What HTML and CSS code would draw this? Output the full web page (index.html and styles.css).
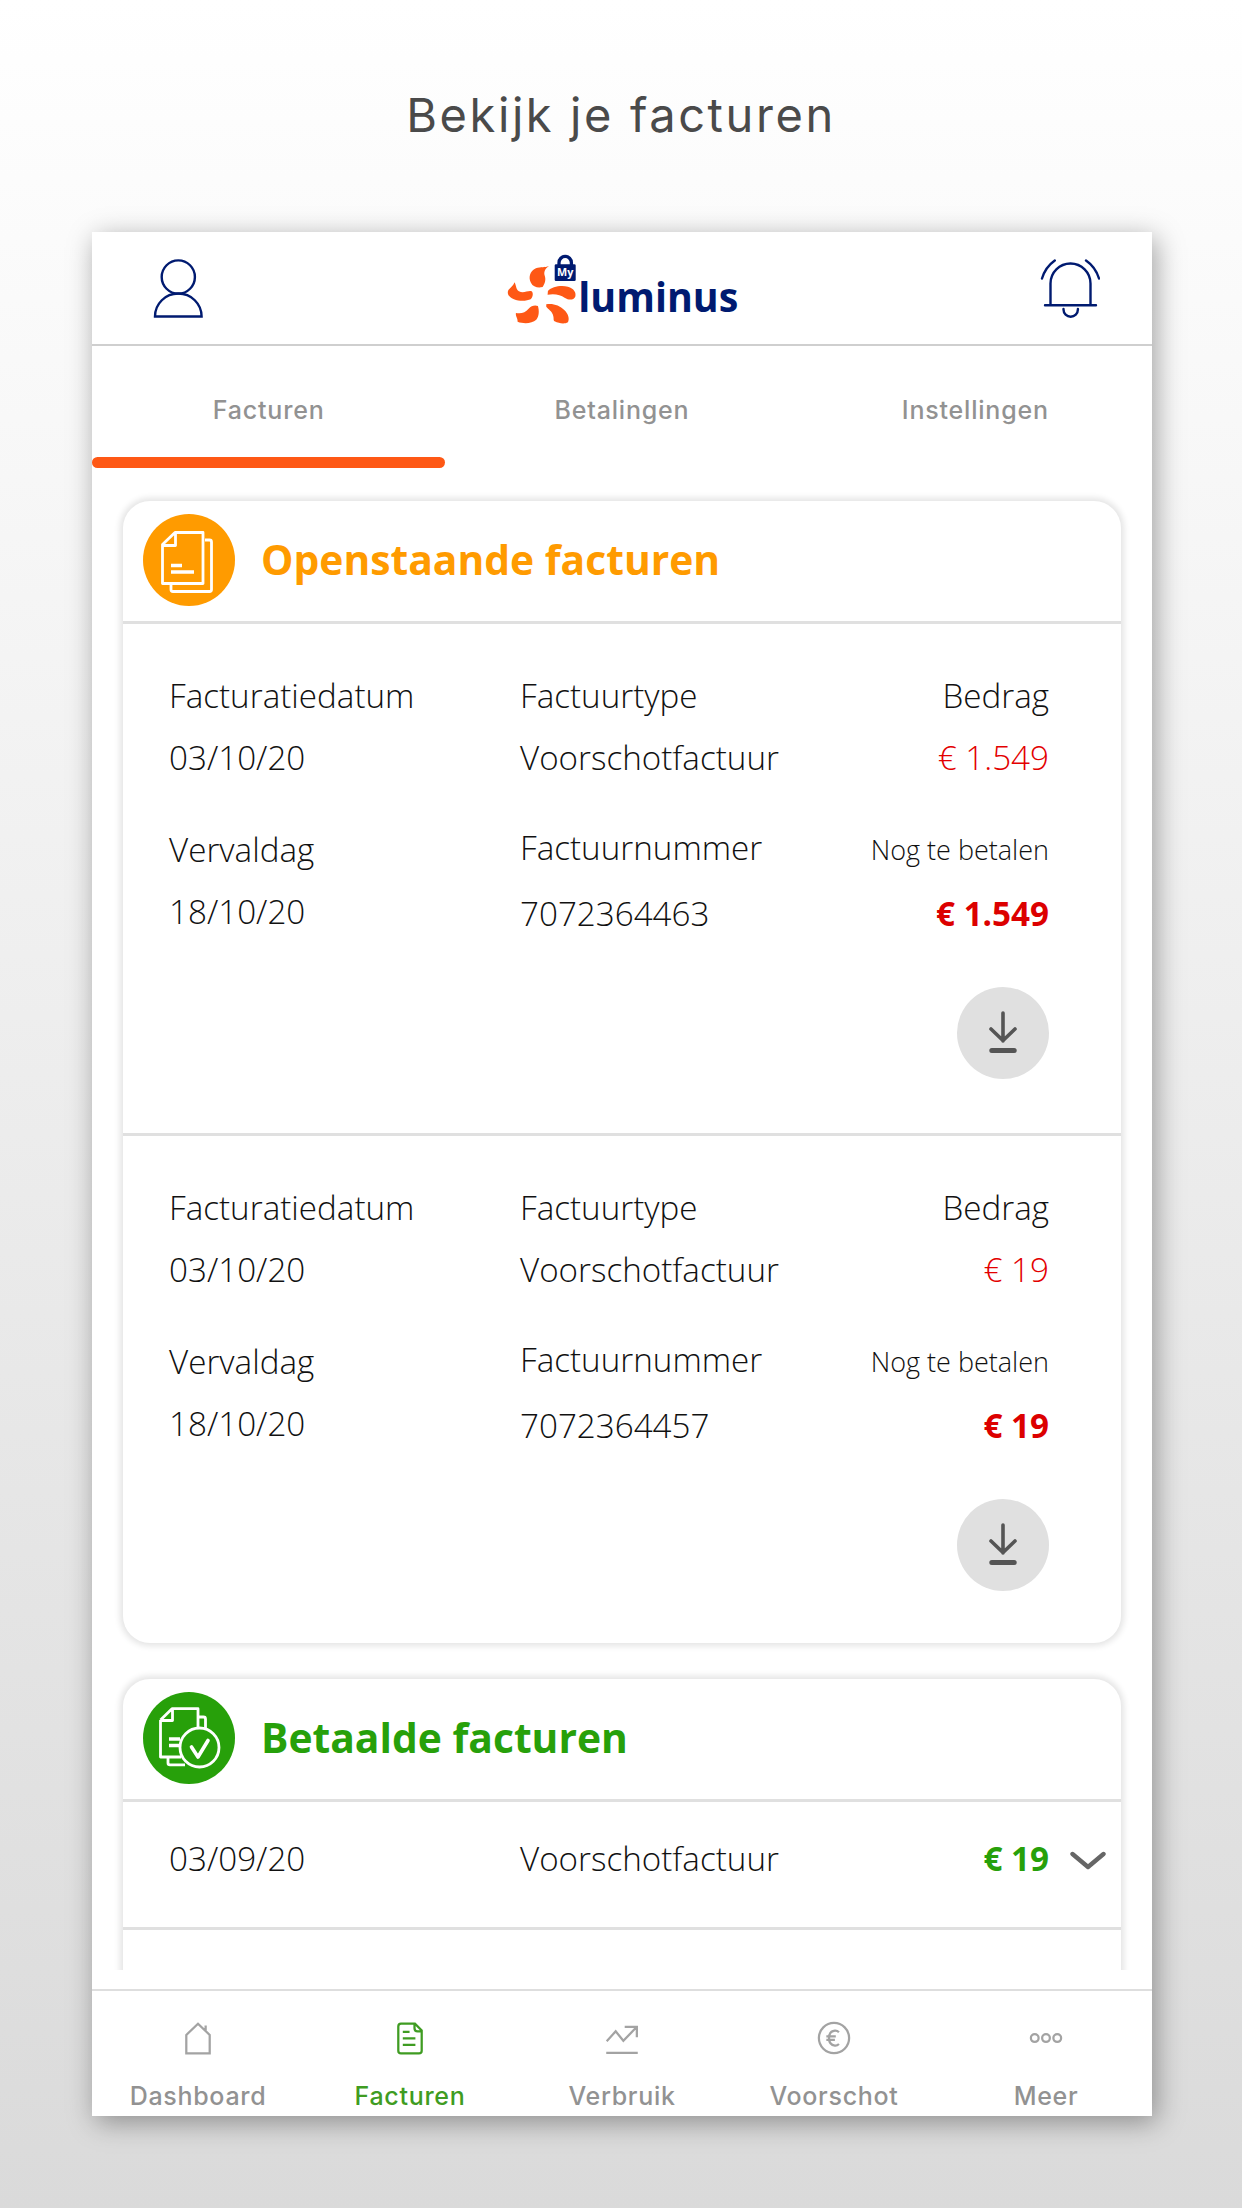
FILE: index.html
```html
<!DOCTYPE html>
<html lang="nl">
<head>
    <meta charset="UTF-8">
    <meta name="viewport" content="width=device-width, initial-scale=1.0">
    <title>My Luminus - Facturen</title>
    <link rel="stylesheet" href="styles.css">
</head>
<body>

    <h1>Bekijk je facturen</h1>

    <div class="phone">
        <header class="topbar">
            <svg class="icon-user" viewBox="0 0 50 60" width="50" height="60">
                <circle cx="25.3" cy="18" r="16.6"/>
                <path d="M2 57.5a23.3 23 0 0 1 46.600 0z"/>
            </svg>

            <svg class="logo" viewBox="0 0 240 80" width="240" height="80">
                <g class="petals" transform="translate(-21.400 -18.300) scale(.3333)">
                    <path d="M205 106C192 112 181 107 166 113C147 121 143 142 151 156C157 169 172 172 186 169C193 159 197 148 192 134C189 124 194 113 205 106Z"/>
                    <path d="M102 155C98 165 91 170 84 177C77 188 86 201 100 206C117 213 140 211 150 206C157 199 159 187 153 182C143 178 129 190 115 182C106 176 107 165 102 155Z"/>
                    <path d="M202 181C214 168 240 163 262 168C280 173 288 186 284 198C279 208 266 210 252 201C240 192 221 188 201 192Z"/>
                    <path d="M106 247C122 250 134 246 144 234C152 226 162 222 172 226C176 240 176 256 167 267C154 279 129 280 111 273C112 263 104 256 106 247Z"/>
                    <path d="M197 221C216 217 237 224 251 238C264 251 267 264 262 275C252 281 236 279 222 272C217 268 221 264 217 252C213 240 204 237 197 228Z"/>
                </g>
                <path class="lock-arc" d="M57 16.300V13.700a6.200 6.300 0 0 1 12.400 0v2.600"/>
                <rect class="lock-body" x="52.700" y="15.300" width="21" height="16.700" rx="1.300"/>
                <text class="lock-text" x="55" y="27" textLength="16.300" lengthAdjust="spacingAndGlyphs">My</text>
                <text class="brand" x="76.300" y="63.300" textLength="160" lengthAdjust="spacingAndGlyphs">luminus</text>
            </svg>

            <svg class="icon-bell" viewBox="0 0 60 60" width="60" height="60">
                <path d="M10.500 46V24.500a20 20 0 0 1 40 0V46M5 46.300h51M23.500 50v.5a7.200 7.200 0 0 0 14.400 0v-.5M2 19.500Q5.500 8 14.800 1.500M59 19.500Q55.500 8 46 1.500"/>
            </svg>
        </header>

        <nav class="tabs">
            <a class="tab active">Facturen</a>
            <a class="tab">Betalingen</a>
            <a class="tab">Instellingen</a>
        </nav>

        <main class="content">
            <section class="card open">
                <div class="card-title">
                    <svg viewBox="0 0 92 92" width="92" height="92">
                        <circle class="disc" cx="46" cy="46" r="46"/>
                        <path class="line" d="M19.500 30.500L32 18.500H60V69.500H19.500zM32.500 19V31.500H20M62 26h4.500q2 0 2 2V75.500q0 2-2 2H30q-2 0-2-2V71"/>
                        <path class="line thick" d="M28 51.500H39M28 58H51"/>
                    </svg>
                    <h2>Openstaande facturen</h2>
                </div>

                <div class="invoice">
                    <div class="col">
                        <span>Facturatiedatum</span>
                        <span>03/10/20</span>
                        <span class="next">Vervaldag</span>
                        <span>18/10/20</span>
                    </div>
                    <div class="col type">
                        <span>Factuurtype</span>
                        <span>Voorschotfactuur</span>
                        <span class="next">Factuurnummer</span>
                        <span class="number">7072364463</span>
                    </div>
                    <div class="col amount">
                        <span>Bedrag</span>
                        <span class="red">€ 1.549</span>
                        <span class="next small">Nog te betalen</span>
                        <span class="due">€ 1.549</span>
                        <button class="download">
                            <svg viewBox="0 0 30 44" width="30" height="44">
                                <path d="M15 2V30M3 18L15 29.500L27 18"/>
                                <path class="base" d="M3.800 39.500H26.200"/>
                            </svg>
                        </button>
                    </div>
                </div>

                <div class="invoice">
                    <div class="col">
                        <span>Facturatiedatum</span>
                        <span>03/10/20</span>
                        <span class="next">Vervaldag</span>
                        <span>18/10/20</span>
                    </div>
                    <div class="col type">
                        <span>Factuurtype</span>
                        <span>Voorschotfactuur</span>
                        <span class="next">Factuurnummer</span>
                        <span class="number">7072364457</span>
                    </div>
                    <div class="col amount">
                        <span>Bedrag</span>
                        <span class="red">€ 19</span>
                        <span class="next small">Nog te betalen</span>
                        <span class="due">€ 19</span>
                        <button class="download">
                            <svg viewBox="0 0 30 44" width="30" height="44">
                                <path d="M15 2V30M3 18L15 29.500L27 18"/>
                                <path class="base" d="M3.800 39.500H26.200"/>
                            </svg>
                        </button>
                    </div>
                </div>
            </section>

            <section class="card paid">
                <div class="card-title">
                    <svg viewBox="0 0 92 92" width="92" height="92">
                        <circle class="disc" cx="46" cy="46" r="46"/>
                        <path class="line" d="M17.500 28L29 16.700H55V36M38 65H17.500V28M29.500 17V28.500H18M56 25h4.500q2 0 2 2V38M25 66v5q0 1.800 2 1.800H42"/>
                        <path class="line thick" d="M26 47H37M26 53.500H36"/>
                        <circle class="line" cx="56.500" cy="55.500" r="19.500"/>
                        <path class="line thick" d="M48.500 55L55 65L65 48.500" stroke-linecap="round"/>
                    </svg>
                    <h2>Betaalde facturen</h2>
                </div>

                <div class="paid-row">
                    <span>03/09/20</span>
                    <span>Voorschotfactuur</span>
                    <span class="paid-amount">€ 19</span>
                    <svg class="chevron" viewBox="0 0 36 20" width="36" height="20">
                        <path d="M2.500 3L18 16L33.500 3"/>
                    </svg>
                </div>
            </section>
        </main>

        <nav class="bottom-nav">
            <a class="item">
                <svg viewBox="0 0 36 40" width="36" height="40">
                    <path d="M5 15.500L18 3L31 15.500V36H5zM26.500 5V11"/>
                </svg>
                Dashboard
            </a>
            <a class="item active">
                <svg viewBox="0 0 36 40" width="36" height="40">
                    <path d="M8 3H23.500L31 10.500V33q0 3-3 3H8q-3 0-3-3V6q0-3 3-3zM23 3V8q0 3.500 3.500 3.500H31M10 12.200H17.500M10 19.400H24M10 26.500H24"/>
                </svg>
                Facturen
            </a>
            <a class="item">
                <svg viewBox="0 0 36 40" width="36" height="40">
                    <path d="M1 22.500L11 11.500L19.500 22L34 7M21 6.500H34.500V18M.5 35.500H35.500"/>
                </svg>
                Verbruik
            </a>
            <a class="item">
                <svg viewBox="0 0 36 40" width="36" height="40">
                    <circle cx="18" cy="19" r="16.800"/>
                    <path d="M23.500 12.500Q21.500 10.500 19 10.700C14.500 11 12.500 14.500 12.500 19S14.500 27 19 27.300Q21.500 27.500 23.500 25.500M9.500 17H20M9.500 21H19"/>
                </svg>
                Voorschot
            </a>
            <a class="item">
                <svg viewBox="0 0 36 40" width="36" height="40">
                    <circle cx="5.500" cy="19" r="4.300"/>
                    <circle cx="18" cy="19" r="4.300"/>
                    <circle cx="30.500" cy="19" r="4.300"/>
                </svg>
                Meer
            </a>
        </nav>
    </div>

</body>
</html>
```
FILE: styles.css
```css
* {
    box-sizing: border-box;
}
body {
    margin: 0;
    height: 2208px;
    padding-top: 80px;
    background: linear-gradient(#ffffff, #dadada);
    font-family: "Open Sans", sans-serif;
    color: #111;
}
h1 {
    margin: 0 0 82px;
    text-align: center;
    font-family: Inter, sans-serif;
    font-size: 47px;
    font-weight: 400;
    line-height: 70px;
    letter-spacing: 2.6px;
    color: #4a4a4a;
}
.phone {
    width: 1060px;
    height: 1884px;
    margin: 0 auto 0 92px;
    background-color: #fff;
    box-shadow: 4px 6px 26px rgba(0, 0, 0, 0.36);
    display: flex;
    flex-direction: column;
    overflow: hidden;
}

/* header */
.topbar {
    height: 114px;
    flex: none;
    padding: 17px 52px 0 61px;
    border-bottom: 2px solid #cfcfcf;
    display: flex;
    justify-content: space-between;
    align-items: flex-start;
}
.icon-user, .icon-bell {
    margin-top: 10px;
    fill: none;
    stroke: #001a70;
    stroke-width: 2.4;
    stroke-linecap: round;
}
.logo {
    overflow: visible;
}
.petals {
    fill: #fe5815;
}
.lock-arc {
    fill: none;
    stroke: #001a70;
    stroke-width: 3.3;
}
.lock-body {
    fill: #001a70;
}
.lock-text {
    font-size: 11.3px;
    font-weight: 700;
    fill: #fff;
}
.brand {
    font-size: 41.5px;
    font-weight: 700;
    fill: #001a70;
}

/* tabs */
.tabs {
    display: flex;
    flex: none;
    height: 122px;
}
.tab {
    flex: 1;
    height: 122px;
    padding-top: 44px;
    text-align: center;
    font-family: Inter, sans-serif;
    font-size: 25px;
    font-weight: 500;
    line-height: 40px;
    letter-spacing: 0.8px;
    color: #929292;
}
.tab.active::after {
    content: "";
    display: block;
    height: 11px;
    margin-top: 27px;
    border-radius: 6px;
    background-color: #fe5815;
}

/* cards */
.content {
    height: 1502px;
    flex: none;
    padding: 33px 31px 0;
    overflow: hidden;
}
.card {
    border-radius: 27px;
    box-shadow: 0 0 6px 3px rgba(0, 0, 0, 0.11);
    margin-bottom: 36px;
}
.paid {
    height: 400px;
}
.card-title {
    height: 123px;
    padding: 13px 0 0 20px;
    border-bottom: 3px solid #e0e0e0;
    display: flex;
    gap: 26px;
}
.card-title h2 {
    margin: 0;
    font-size: 40.8px;
    font-weight: 700;
    line-height: 91px;
}
.open h2 {
    color: #ff9b00;
}
.open .disc {
    fill: #ff9b00;
}
.paid h2 {
    color: #27a00a;
}
.paid .disc {
    fill: #27a00a;
}
.line {
    fill: none;
    stroke: #fff;
    stroke-width: 2.8;
    stroke-linejoin: round;
}
.paid circle.line {
    fill: #27a00a;
}
.thick {
    stroke-width: 3.6;
}
.invoice {
    height: 512px;
    padding: 41px 72px 0 46px;
    display: grid;
    grid-template-columns: 351px 299px 1fr;
    font-size: 33.2px;
    font-weight: 300;
    line-height: 62px;
    border-bottom: 3px solid #e0e0e0;
}
.invoice:last-child {
    height: 507px;
    border-bottom: none;
}
.col {
    display: flex;
    flex-direction: column;
    white-space: nowrap;
}
.next {
    margin-top: 30px;
}
.type .next {
    margin-top: 28px;
}
.number {
    margin-top: 4px;
}
.amount {
    align-items: flex-end;
}
.red {
    color: #e30000;
}
.amount .small {
    font-size: 27px;
}
.due {
    margin-top: 2px;
    font-weight: 700;
    color: #dc0000;
}
.download {
    width: 92px;
    height: 92px;
    margin-top: 42px;
    padding: 0;
    border: none;
    border-radius: 50%;
    background-color: #e0e0e0;
    display: flex;
    justify-content: center;
    align-items: center;
}
.download svg {
    fill: none;
    stroke: #555;
    stroke-width: 3.6;
    stroke-linecap: round;
}
.download .base {
    stroke-width: 5;
}
.paid-row {
    height: 128px;
    padding: 0 15px 12px 46px;
    border-bottom: 3px solid #e0e0e0;
    display: grid;
    grid-template-columns: 351px 299px 1fr 57px;
    align-items: center;
    font-size: 33.2px;
    font-weight: 300;
}
.paid-amount {
    text-align: right;
    font-weight: 700;
    color: #27a00a;
}
.chevron {
    justify-self: end;
    margin-top: 4px;
    fill: none;
    stroke: #666;
    stroke-width: 4.4;
    stroke-linecap: round;
    stroke-linejoin: round;
}

/* bottom navigation */
.bottom-nav {
    margin-top: auto;
    height: 127px;
    flex: none;
    border-top: 2px solid #dedede;
    display: flex;
}
.item {
    flex: 1;
    padding-top: 30px;
    display: flex;
    flex-direction: column;
    align-items: center;
    font-family: Inter, sans-serif;
    font-size: 25px;
    font-weight: 500;
    line-height: 40px;
    letter-spacing: 0.7px;
    color: #929292;
}
.item svg {
    margin-bottom: 19px;
    fill: none;
    stroke: #a3a3a3;
    stroke-width: 2.5;
}
.item.active {
    color: #3f9c22;
}
.item.active svg {
    stroke: #3f9c22;
}
```
